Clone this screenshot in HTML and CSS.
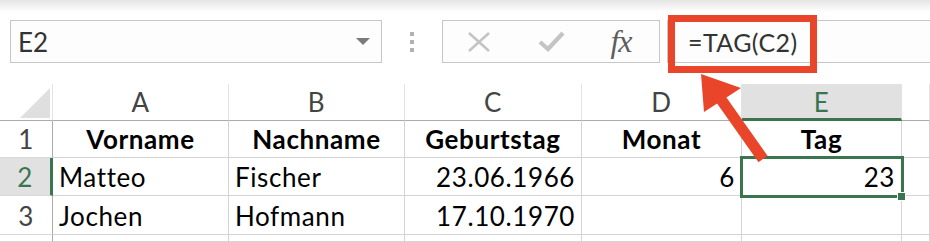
FILE: index.html
```html
<!DOCTYPE html>
<html lang="de">
<head>
    <meta charset="UTF-8">
    <meta name="viewport" content="width=device-width, initial-scale=1.0">
    <title>TAG Formel</title>
    <link rel="stylesheet" href="styles.css">
</head>
<body>
    <div class="ribbon-edge"></div>

    <!-- Formula bar -->
    <div class="formula-bar">
        <div class="name-box">
            <span>E2</span>
            <span class="caret"></span>
        </div>
        <div class="grip"><i></i><i></i><i></i></div>
        <div class="fx-tools">
            <svg width="24" height="20" viewBox="0 0 24 20">
                <path d="M2 1 L22 19 M22 1 L2 19" stroke="#c4c4c4" stroke-width="2.6" fill="none"/>
            </svg>
            <svg width="27" height="21" viewBox="0 0 27 21">
                <path d="M2 11 L10 18 L25 2" stroke="#c4c4c4" stroke-width="4.2" fill="none"/>
            </svg>
            <span class="fx">fx</span>
        </div>
        <div class="formula-input">=TAG(C2)</div>
    </div>

    <!-- Sheet grid -->
    <div class="sheet">
        <div class="corner"><span class="corner-tri"></span></div>
        <div class="col-head">A</div>
        <div class="col-head">B</div>
        <div class="col-head">C</div>
        <div class="col-head">D</div>
        <div class="col-head active">E</div>
        <div class="col-head"></div>

        <div class="row-head">1</div>
        <div class="cell bold center">Vorname</div>
        <div class="cell bold center">Nachname</div>
        <div class="cell bold center">Geburtstag</div>
        <div class="cell bold center">Monat</div>
        <div class="cell bold center">Tag</div>
        <div class="cell"></div>

        <div class="row-head active">2</div>
        <div class="cell">Matteo</div>
        <div class="cell">Fischer</div>
        <div class="cell num">23.06.1966</div>
        <div class="cell num">6</div>
        <div class="cell num selected">23</div>
        <div class="cell"></div>

        <div class="row-head">3</div>
        <div class="cell">Jochen</div>
        <div class="cell">Hofmann</div>
        <div class="cell num">17.10.1970</div>
        <div class="cell"></div>
        <div class="cell"></div>
        <div class="cell"></div>

        <div class="row-head"></div>
        <div class="cell"></div>
        <div class="cell"></div>
        <div class="cell"></div>
        <div class="cell"></div>
        <div class="cell"></div>
        <div class="cell"></div>
    </div>

    <!-- Annotation -->
    <div class="callout"></div>
    <svg class="arrow" width="930" height="242" viewBox="0 0 930 242">
        <line x1="720" y1="98" x2="763" y2="159" stroke="#e9452a" stroke-width="11"/>
        <polygon points="701,74 741,88 704,112" fill="#e9452a"/>
    </svg>
</body>
</html>
```

FILE: styles.css
```css
* {
    margin: 0;
    padding: 0;
    box-sizing: border-box;
}

body {
    width: 930px;
    height: 242px;
    overflow: hidden;
    background-color: #FFFFFF;
    font-family: Lato, "Open Sans", sans-serif;
    color: #000000;
    position: relative;
}

.ribbon-edge {
    height: 12px;
    background: linear-gradient(#e4e4e4, #ffffff);
}

/* Formula bar */
.formula-bar {
    display: flex;
    height: 43px;
    margin-top: 8px;
    padding-left: 10px;
}

.name-box {
    width: 372px;
    border: 1px solid #c6c6c6;
    background-color: #fdfdfd;
    display: flex;
    align-items: center;
    justify-content: space-between;
    padding: 0 11px 0 7px;
    font-size: 26px;
    color: #333333;
}

.caret {
    width: 0;
    height: 0;
    border-left: 7px solid transparent;
    border-right: 7px solid transparent;
    border-top: 7px solid #7b7b7b;
}

.grip {
    width: 60px;
    display: flex;
    flex-direction: column;
    align-items: center;
    justify-content: center;
    gap: 4px;
}

.grip i {
    display: block;
    width: 4px;
    height: 4px;
    background-color: #b2b2b2;
}

.fx-tools {
    width: 218px;
    border: 1px solid #c6c6c6;
    background-color: #fdfdfd;
    display: grid;
    grid-template-columns: 1fr 1fr 1fr;
    align-items: center;
    justify-items: center;
}

.fx {
    font-family: "Liberation Serif", serif;
    font-style: italic;
    font-size: 32px;
    color: #5e5e5e;
    margin-right: 4px;
    letter-spacing: -1px;
}

.formula-input {
    flex: 1;
    margin-left: 7px;
    border: 1px solid #c6c6c6;
    border-right: none;
    background-color: #fdfdfd;
    display: flex;
    align-items: center;
    padding-left: 20px;
    font-size: 25px;
    letter-spacing: 0.4px;
    color: #333333;
}

/* Sheet */
.sheet {
    margin-top: 21px;
    display: grid;
    grid-template-columns: 53px 176px 176px 177px 160px 160px 1fr;
    grid-template-rows: 37px 37px 38px 39px 7px;
    font-size: 26px;
    letter-spacing: 0.6px;
    line-height: 1;
}

.corner {
    position: relative;
    border-right: 1px solid #e3e3e3;
    border-bottom: 1px solid #ababab;
}

.corner-tri {
    position: absolute;
    right: 2px;
    bottom: 2px;
    width: 30px;
    height: 30px;
    background-color: #dfdfdf;
    clip-path: polygon(100% 0, 100% 100%, 0 100%);
}

.col-head {
    border-right: 1px solid #e3e3e3;
    border-bottom: 1px solid #ababab;
    display: flex;
    align-items: flex-end;
    justify-content: center;
    padding-bottom: 5px;
    color: #444444;
}

.col-head.active {
    background-color: #e1e1e1;
    color: #3a7550;
    border-bottom: 3px solid #3a7550;
    padding-bottom: 3px;
}

.row-head {
    border-right: 1px solid #ababab;
    border-bottom: 1px solid #d9d9d9;
    display: flex;
    align-items: flex-end;
    justify-content: center;
    padding-bottom: 5px;
    color: #444444;
}

.row-head.active {
    background-color: #e1e1e1;
    color: #3a7550;
    border-right: 3px solid #3a7550;
}

.cell {
    border-right: 1px solid #d4d4d4;
    border-bottom: 1px solid #d4d4d4;
    display: flex;
    align-items: flex-end;
    padding: 0 6px 5px;
    white-space: nowrap;
}

.bold {
    font-weight: 700;
}

.center {
    justify-content: center;
}

.num {
    justify-content: flex-end;
}

.selected {
    position: relative;
    outline: 3px solid #3a7550;
    outline-offset: -1px;
}

.selected::after {
    content: "";
    position: absolute;
    right: -5px;
    bottom: -6px;
    width: 7px;
    height: 7px;
    background-color: #3a7550;
    border: 1px solid #ffffff;
}

/* Annotation overlay */
.callout {
    position: absolute;
    left: 668px;
    top: 15px;
    width: 149px;
    height: 58px;
    border: 7px solid #e9452a;
}

.arrow {
    position: absolute;
    left: 0;
    top: 0;
}
```
